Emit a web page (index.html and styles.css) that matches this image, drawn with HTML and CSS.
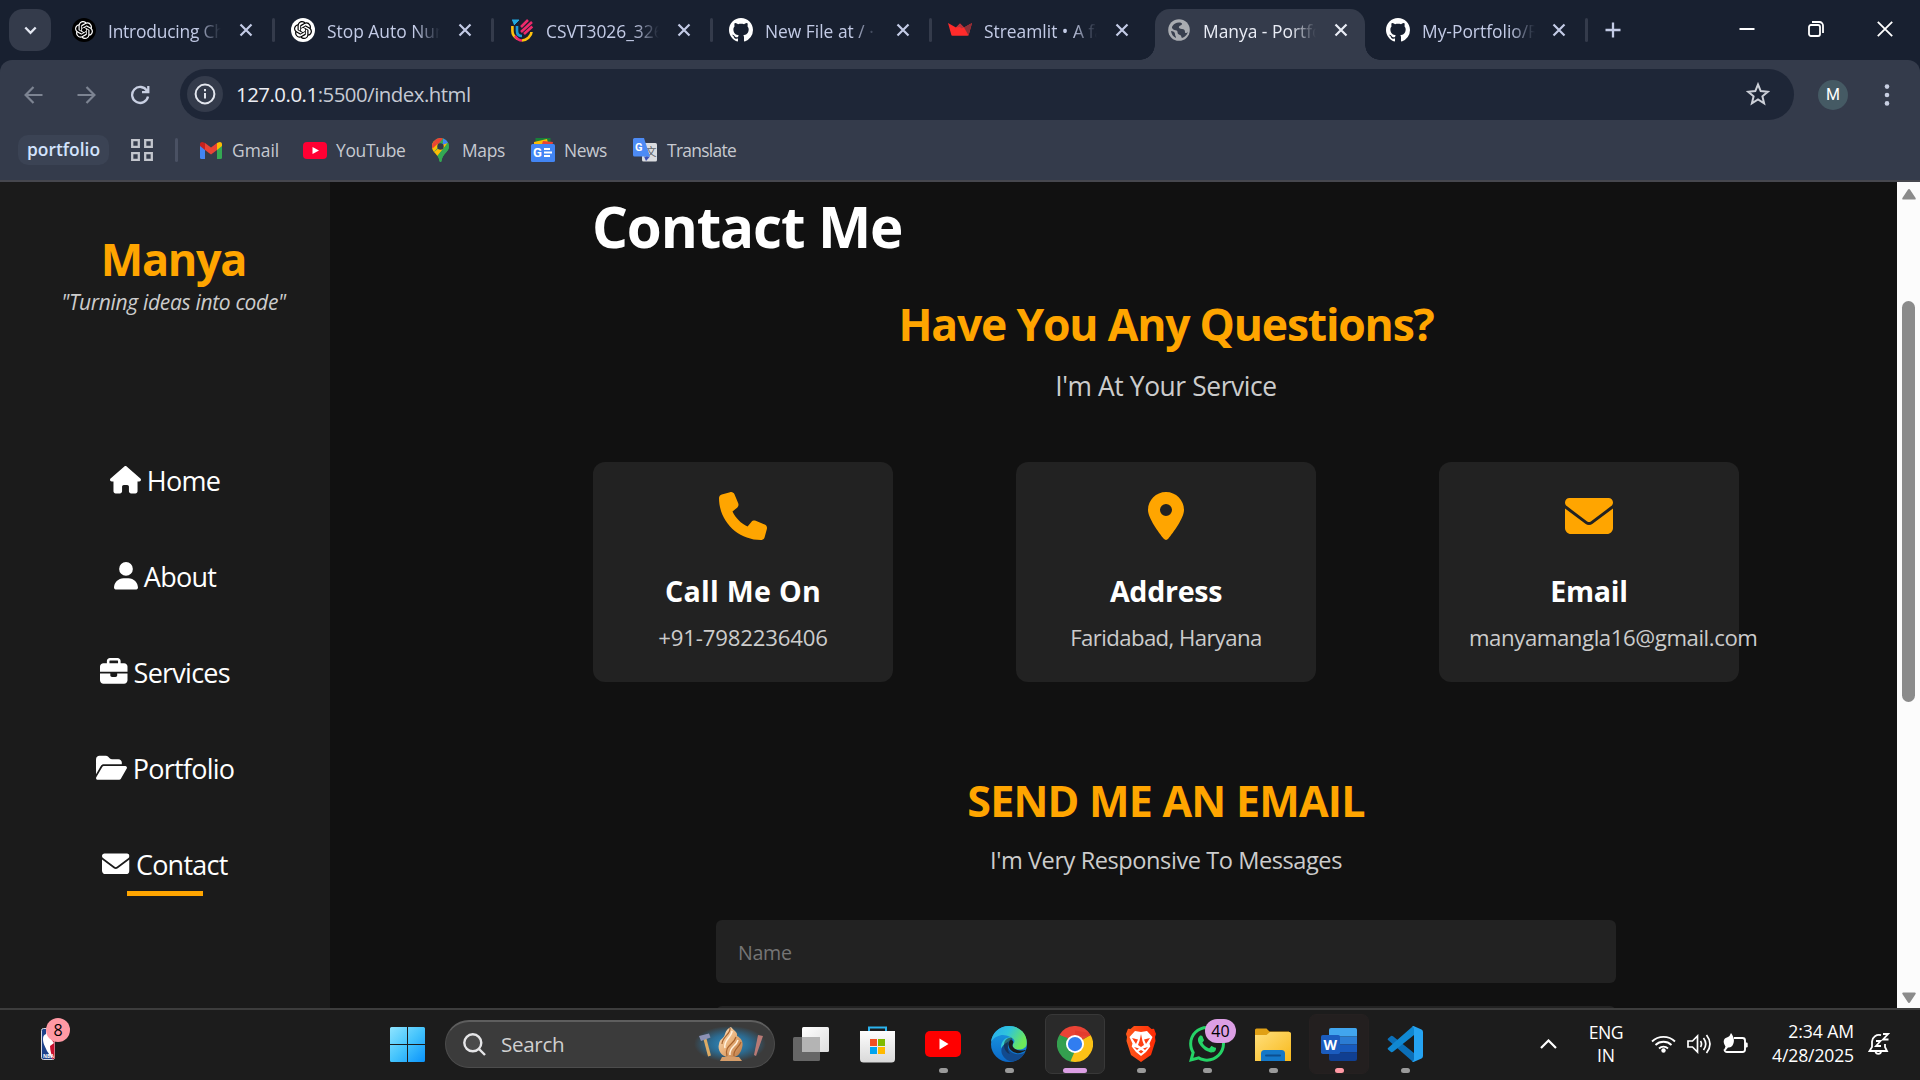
FILE: index.html
```html
<!DOCTYPE html>
<html lang="en">
<head>
<meta charset="utf-8">
<title>Manya - Portfolio</title>
<link rel="stylesheet" href="styles.css">
</head>
<body>
<svg class="defs" width="0" height="0" aria-hidden="true">
  <defs>
    <symbol id="close" viewBox="0 0 14 14"><path d="M1.5 1.5l11 11M12.5 1.5l-11 11" fill="none" stroke="currentColor" stroke-width="2.2"/></symbol>
    <symbol id="openai" viewBox="0 0 24 24"><path fill="currentColor" d="M22.2819 9.8211a5.9847 5.9847 0 0 0-.5157-4.9108 6.0462 6.0462 0 0 0-6.5098-2.9A6.0651 6.0651 0 0 0 4.9807 4.1818a5.9847 5.9847 0 0 0-3.9977 2.9 6.0462 6.0462 0 0 0 .7427 7.0966 5.98 5.98 0 0 0 .511 4.9107 6.051 6.051 0 0 0 6.5146 2.9001A5.9847 5.9847 0 0 0 13.2599 24a6.0557 6.0557 0 0 0 5.7718-4.2058 5.9894 5.9894 0 0 0 3.9977-2.9001 6.0557 6.0557 0 0 0-.7475-7.0729zm-9.022 12.6081a4.4755 4.4755 0 0 1-2.8764-1.0408l.1419-.0804 4.7783-2.7582a.7948.7948 0 0 0 .3927-.6813v-6.7369l2.02 1.1686a.071.071 0 0 1 .038.052v5.5826a4.504 4.504 0 0 1-4.4945 4.4944zm-9.6607-4.1254a4.4708 4.4708 0 0 1-.5346-3.0137l.142.0852 4.783 2.7582a.7712.7712 0 0 0 .7806 0l5.8428-3.3685v2.3324a.0804.0804 0 0 1-.0332.0615L9.74 19.9502a4.4992 4.4992 0 0 1-6.1408-1.6464zM2.3408 7.8956a4.485 4.485 0 0 1 2.3655-1.9728V11.6a.7664.7664 0 0 0 .3879.6765l5.8144 3.3543-2.0201 1.1685a.0757.0757 0 0 1-.071 0l-4.8303-2.7865A4.504 4.504 0 0 1 2.3408 7.872zm16.5963 3.8558L13.1038 8.364 15.1192 7.2a.0757.0757 0 0 1 .071 0l4.8303 2.7913a4.4944 4.4944 0 0 1-.6765 8.1042v-5.6772a.79.79 0 0 0-.407-.667zm2.0107-3.0231l-.142-.0852-4.7735-2.7818a.7759.7759 0 0 0-.7854 0L9.409 9.2297V6.8974a.0662.0662 0 0 1 .0284-.0615l4.8303-2.7866a4.4992 4.4992 0 0 1 6.6802 4.66zM8.3065 12.863l-2.02-1.1638a.0804.0804 0 0 1-.038-.0567V6.0742a4.4992 4.4992 0 0 1 7.3757-3.4537l-.142.0805L8.704 5.459a.7948.7948 0 0 0-.3927.6813zm1.0976-2.3654l2.602-1.4998 2.6069 1.4998v2.9994l-2.5974 1.4997-2.6067-1.4997Z"/></symbol>
    <symbol id="github" viewBox="0 0 16 16"><path fill="#fff" d="M8 0C3.58 0 0 3.58 0 8c0 3.54 2.29 6.53 5.47 7.59.4.07.55-.17.55-.38 0-.19-.01-.82-.01-1.49-2.01.37-2.53-.49-2.69-.94-.09-.23-.48-.94-.82-1.13-.28-.15-.68-.52-.01-.53.63-.01 1.08.58 1.23.82.72 1.21 1.87.87 2.33.66.07-.52.28-.87.51-1.07-1.78-.2-3.64-.89-3.64-3.95 0-.87.31-1.59.82-2.15-.08-.2-.36-1.02.08-2.12 0 0 .67-.21 2.2.82.64-.18 1.32-.27 2-.27s1.36.09 2 .27c1.53-1.04 2.2-.82 2.2-.82.44 1.1.16 1.92.08 2.12.51.56.82 1.27.82 2.15 0 3.07-1.87 3.75-3.65 3.95.29.25.54.73.54 1.48 0 1.07-.01 1.93-.01 2.2 0 .21.15.46.55.38A8.01 8.01 0 0 0 16 8c0-4.42-3.58-8-8-8z"/></symbol>
    <symbol id="envelope" viewBox="0 0 512 512"><path fill="currentColor" d="M48 64C21.5 64 0 85.5 0 112c0 15.1 7.1 29.3 19.2 38.4L236.8 313.6c11.4 8.5 27 8.5 38.4 0L492.8 150.4c12.1-9.1 19.2-23.3 19.2-38.4c0-26.5-21.5-48-48-48H48zM0 176V384c0 35.3 28.7 64 64 64H448c35.3 0 64-28.7 64-64V176L294.4 339.2c-22.8 17.1-54 17.1-76.8 0L0 176z"/></symbol>
    <linearGradient id="win" x1="0" y1="0" x2="1" y2="1"><stop offset="0" stop-color="#8fe4ff"/><stop offset=".5" stop-color="#45c4fc"/><stop offset="1" stop-color="#0a93fb"/></linearGradient>
    <linearGradient id="bag" x1="0" y1="0" x2="0" y2="1"><stop offset="0" stop-color="#fdfdfd"/><stop offset="1" stop-color="#d9d9d9"/></linearGradient>
    <linearGradient id="edgeTop" x1="0" y1="0" x2="1" y2=".4"><stop offset="0" stop-color="#27a9f2"/><stop offset=".5" stop-color="#2fc4dc"/><stop offset="1" stop-color="#6ce85a"/></linearGradient>
    <linearGradient id="edgeLeft" x1="0" y1="0" x2="0" y2="1"><stop offset="0" stop-color="#1b9de2"/><stop offset="1" stop-color="#0b68c8"/></linearGradient>
    <linearGradient id="brave" x1="0" y1="0" x2="1" y2="0"><stop offset="0" stop-color="#ff5a1c"/><stop offset="1" stop-color="#ff2a05"/></linearGradient>
    <linearGradient id="folder" x1="0" y1="0" x2="1" y2="1"><stop offset="0" stop-color="#ffdf7c"/><stop offset="1" stop-color="#f8b91b"/></linearGradient>
    <linearGradient id="glass" x1="0" y1="0" x2="1" y2="1"><stop offset="0" stop-color="#fff"/><stop offset="1" stop-color="#dedede"/></linearGradient>
    <radialGradient id="glow"><stop offset="0" stop-color="#2f8fc8"/><stop offset=".55" stop-color="#2c6b91"/><stop offset="1" stop-color="#3b3b3b"/></radialGradient>
    <linearGradient id="clay" x1="0" y1="0" x2="1" y2="1"><stop offset="0" stop-color="#fbe3c6"/><stop offset=".5" stop-color="#e9b27b"/><stop offset="1" stop-color="#b87542"/></linearGradient>
  </defs>
</svg>

<header class="browser">
  <div class="tabstrip">
    <button class="tab-search"><svg width="13" height="9" viewBox="0 0 13 9"><path d="M1.3 1.5l5.2 5.3 5.2-5.3" fill="none" stroke="#e4e8f2" stroke-width="2.3"/></svg></button>
    <div class="tab"><span class="favicon fav-dark"><svg width="18" height="18"><use href="#openai"/></svg></span><span class="tab-title tight">Introducing ChatGPT</span><svg class="tab-close"><use href="#close"/></svg></div>
    <div class="tab"><span class="favicon fav-light"><svg width="18" height="18"><use href="#openai"/></svg></span><span class="tab-title">Stop Auto Numbering</span><svg class="tab-close"><use href="#close"/></svg></div>
    <div class="tab"><span class="favicon"><svg width="24" height="24" viewBox="0 0 24 24" fill="none" stroke-width="2.6"><path d="M2 2h7L4 7" fill="#20a9e0" stroke="#20a9e0" stroke-width="1"/><path d="M2.4 8v5c0 3 2 6 5 8" stroke="#ffc20e"/><path d="M7 8v5c0 4 2 5 5 5" stroke="#1b9ad6"/><path d="M18 2l-7 7M22 4L11 14" stroke="#ee2a6b"/><path d="M22.3 8.500L14 16" stroke="#ee2a6b"/><path d="M21.500 14c0 4-5 8.500-9.500 8.500" stroke="#ffc20e"/><path d="M5 18c2 3 5 4.500 7 4.500" stroke="#ee2a6b"/></svg></span><span class="tab-title">CSVT3026_3260</span><svg class="tab-close"><use href="#close"/></svg></div>
    <div class="tab"><span class="favicon"><svg width="24" height="24"><use href="#github"/></svg></span><span class="tab-title">New File at / · My</span><svg class="tab-close"><use href="#close"/></svg></div>
    <div class="tab no-line"><span class="favicon"><svg width="24" height="24" viewBox="0 0 24 24"><path d="M0 5l8 4.500 4-4 4 4L24 5l-3.500 12.500H3.500z" fill="#ff2b2b"/><path d="M12 5.500l4 4-4 1.500-4-1.500z" fill="#b8343c"/><path d="M16 9.500L24 5l-3.500 12.500z" fill="#8b3038"/><path d="M12 9l8 8.500H4L8 9.500z" fill="#ff2b2b"/></svg></span><span class="tab-title">Streamlit • A faster</span><svg class="tab-close"><use href="#close"/></svg></div>
    <div class="tab active"><span class="favicon"><svg width="22" height="22" viewBox="0 0 22 22"><circle cx="11" cy="11" r="10.800" fill="#a9acb1"/><path d="M11 3.500c2 0 3 .5 3 1.500 0 1.500-2 1-3 2.500-.8 1.500 1 2.500 3 2.500s3 1 3 3 2 1 3-.5a9 9 0 0 1-6 6.500c-1-1-.5-2.500-2-3s-2.500-1-2.500-3-1.500-1.500-3-2S3 9 4.500 7 8 3.500 11 3.500z" fill="#383f4e"/><path d="M3 12c2 0 4 1 4 3s1 2 1 4a9 9 0 0 1-5-7z" fill="#383f4e"/></svg></span><span class="tab-title">Manya - Portfolio</span><svg class="tab-close"><use href="#close"/></svg></div>
    <div class="tab last"><span class="favicon"><svg width="24" height="24"><use href="#github"/></svg></span><span class="tab-title">My-Portfolio/README</span><svg class="tab-close"><use href="#close"/></svg></div>
    <button class="new-tab"><svg width="16" height="16" viewBox="0 0 16 16"><path d="M8 .5v15M.5 8h15" stroke="#c3cbe6" stroke-width="2.300"/></svg></button>
    <div class="window-controls">
      <svg width="16" height="16" viewBox="0 0 16 16"><path d="M.5 8h15" stroke="#fff" stroke-width="2"/></svg>
      <svg width="16" height="16" viewBox="0 0 16 16" fill="none" stroke="#fff" stroke-width="1.800"><rect x="1" y="4" width="11" height="11" rx="2"/><path d="M4 1h7.500A3.500 3.500 0 0 1 15 4.500V12"/></svg>
      <svg width="16" height="16" viewBox="0 0 16 16"><path d="M.8.8l14.400 14.400M15.200.8L.8 15.200" stroke="#fff" stroke-width="1.800"/></svg>
    </div>
  </div>

  <div class="toolbar">
    <div class="nav-buttons">
      <svg width="19" height="18" viewBox="0 0 19 18" fill="none" stroke="#7d8492" stroke-width="2.200"><path d="M18.500 9H2M9.500 1L1.600 9l7.900 8"/></svg>
      <svg width="19" height="18" viewBox="0 0 19 18" fill="none" stroke="#7d8492" stroke-width="2.200"><path d="M.5 9H17M9.500 1l7.900 8-7.900 8"/></svg>
      <svg width="20" height="20" viewBox="0 0 20 20" fill="none" stroke="#c8cfe2" stroke-width="2.300"><path d="M17 5.800A8 8 0 1 0 18 11.500M18.300 1v6.200H12"/></svg>
    </div>
    <div class="omnibox">
      <span class="site-info"><svg width="22" height="22" viewBox="0 0 22 22" fill="none" stroke="#e3e6ee" stroke-width="2"><circle cx="11" cy="11" r="9.400"/><path d="M11 10v5.500M11 6v2.200"/></svg></span>
      <span class="url"><span class="host">127.0.0.1</span>:5500/index.html</span>
      <svg class="star" width="24" height="24" viewBox="0 0 24 24"><path d="M12 2.500l2.700 6.600 7.100.6-5.400 4.600 1.700 7L12 17.500l-6.100 3.800 1.700-7-5.400-4.600 7.100-.6z" fill="none" stroke="#cdd0d8" stroke-width="2"/></svg>
    </div>
    <span class="avatar">M</span>
    <svg class="menu" width="6" height="22" viewBox="0 0 6 22" fill="#c8cfe2"><circle cx="3" cy="2.600" r="2.300"/><circle cx="3" cy="11" r="2.300"/><circle cx="3" cy="19.400" r="2.300"/></svg>
  </div>

  <nav class="bookmarks">
    <span class="group-chip">portfolio</span>
    <svg class="apps" width="22" height="22" viewBox="0 0 22 22" fill="none" stroke="#c3c6cd" stroke-width="2.300"><path d="M1.200 1.200h6.600v6.600H1.200zM14.200 1.200h6.600v6.600h-6.600zM1.200 14.200h6.600v6.600H1.200zM14.200 14.200h6.600v6.600h-6.600z"/></svg>
    <span class="divider"></span>
    <span class="bookmark gmail"><svg width="22" height="17" viewBox="0 0 22 17"><path d="M0 2v13.500A1.500 1.500 0 0 0 1.500 17H5V6z" fill="#4285f4"/><path d="M17 6v11h3.500a1.500 1.500 0 0 0 1.500-1.500V2z" fill="#34a853"/><path d="M17 1v7l5-4V2.200C22 .2 19.800-.6 18.200.6z" fill="#fbbc04"/><path d="M5 8V1l6 4.600L17 1v7l-6 4.500z" fill="#ea4335"/><path d="M0 2.200V4l5 4V1L3.800.6C2.200-.6 0 .2 0 2.200z" fill="#c5221f"/></svg>Gmail</span>
    <span class="bookmark youtube"><svg width="24" height="17" viewBox="0 0 24 17"><rect width="24" height="17" rx="4" fill="#f03"/><path d="M9.500 4.900v7.200l6.500-3.600z" fill="#fff"/></svg>YouTube</span>
    <span class="bookmark maps"><svg width="17" height="24" viewBox="0 0 17 24"><path d="M8.500 0A8.500 8.500 0 0 1 17 8.500c0 5.500-6.500 7-7.500 14.500-.2 1.300-1.800 1.300-2 0C6.500 15.500 0 14 0 8.500A8.500 8.500 0 0 1 8.500 0z" fill="#34a853"/><path d="M2 14C.800 12.400 0 10.700 0 8.500c0-2 .7-4 2-5.500l4 3.400-.4 3.400z" fill="#fbbc04"/><path d="M2 3A8.500 8.500 0 0 1 11 .4L6 6.400z" fill="#ea4335"/><path d="M11 .4A8.500 8.500 0 0 1 16 4.500L2.500 14.700 11 5z" fill="#4285f4"/><path d="M11.500 6.500L2 14c1 1.300 2.200 2.400 3.400 3.900L16 5z" fill="#fbbc04"/><path d="M16 4.500c1.500 3 1.200 6-.8 8.500-1.900 2.400-4.900 4.800-5.700 10-.2 1.300-1.800 1.300-2 0-.3-2-1-3.700-2.100-5.100z" fill="#34a853"/><circle cx="8.500" cy="8.500" r="3.200" fill="#303a4c"/><path d="M2 3A8.500 8.500 0 0 0 0 8.500C0 9 .2 9.800.5 10.500L5.500 6z" fill="#ea4335"/></svg>Maps</span>
    <span class="bookmark news"><svg width="24" height="24" viewBox="0 0 24 24"><path d="M4.500 0h15v8h-15z" fill="#188038"/><path d="M3 4l13-3 2 8H3z" fill="#fbbc04"/><path d="M12 3l10 1-1 5H10z" fill="#ea4335"/><rect y="6" width="24" height="18" rx="1.500" fill="#4285f4"/><path d="M13 11h6M13 14.500h8M13 18h6" stroke="#fff" stroke-width="1.800"/><text x="2" y="19" class="icon-g">G</text></svg>News</span>
    <span class="bookmark translate"><svg width="24" height="24" viewBox="0 0 24 24"><rect x="9" y="5" width="15" height="18.500" rx="1.500" fill="#dadce0"/><text x="12.500" y="18" class="icon-zh">文</text><path d="M11 18.500h6L13 23z" fill="#3f51b5"/><path d="M1.500 0H11l6 18.500H1.500A1.500 1.500 0 0 1 0 17V1.500A1.500 1.500 0 0 1 1.500 0z" fill="#4d8bf5"/><text x="2" y="13" class="icon-g small">G</text></svg>Translate</span>
  </nav>
</header>

<div class="viewport">
  <aside class="sidebar">
    <div class="brand">Manya</div>
    <div class="tagline">"Turning ideas into code"</div>
    <ul class="menu-list">
      <li><svg width="31" height="27.500" viewBox="0 0 576 512"><path fill="#fff" d="M575.800 255.500c0 18-15 32.100-32 32.100h-32l.7 160.200c0 2.700-.2 5.400-.5 8.100V472c0 22.100-17.900 40-40 40H456c-1.100 0-2.200 0-3.300-.1c-1.400 .1-2.800 .1-4.200 .1H416 392c-22.100 0-40-17.900-40-40V448 384c0-17.700-14.300-32-32-32H256c-17.700 0-32 14.300-32 32v64 24c0 22.100-17.900 40-40 40H160 128.100c-1.500 0-3-.1-4.500-.2c-1.200 .1-2.400 .2-3.600 .2H104c-22.100 0-40-17.900-40-40V360c0-.9 0-1.900 .1-2.800V287.600H32c-18 0-32-14-32-32.100c0-9 3-17 10-24L266.400 8c7-7 15-8 22-8s15 2 21 7L564.800 231.500c8 7 12 15 11 24z"/></svg><span>Home</span></li>
      <li><svg width="24" height="27.500" viewBox="0 0 448 512"><path fill="#fff" d="M224 256A128 128 0 1 0 224 0a128 128 0 1 0 0 256zm-45.700 48C79.800 304 0 383.800 0 482.300C0 498.700 13.300 512 29.700 512H418.300c16.400 0 29.700-13.300 29.700-29.700C448 383.800 368.200 304 269.700 304H178.300z"/></svg><span>About</span></li>
      <li><svg width="27.500" height="27.500" viewBox="0 0 512 512"><path fill="#fff" d="M184 48H328c4.400 0 8 3.600 8 8V96H176V56c0-4.400 3.600-8 8-8zm-56 8V96H64C28.700 96 0 124.700 0 160v96H192 320 512V160c0-35.300-28.700-64-64-64H384V56c0-30.900-25.100-56-56-56H184c-30.900 0-56 25.100-56 56zM512 288H320v32c0 17.700-14.300 32-32 32H224c-17.700 0-32-14.300-32-32V288H0V416c0 35.300 28.700 64 64 64H448c35.300 0 64-28.700 64-64V288z"/></svg><span>Services</span></li>
      <li><svg width="31" height="27.500" viewBox="0 0 576 512"><path fill="#fff" d="M88.700 223.800L0 375.800V96C0 60.700 28.700 32 64 32H181.500c17 0 33.300 6.700 45.300 18.700l26.500 26.500c12 12 28.300 18.700 45.300 18.700H416c35.300 0 64 28.700 64 64v32H144c-22.800 0-43.800 12.100-55.300 31.800zm27.600 16.100C122.100 230 132.600 224 144 224H544c11.500 0 22 6.100 27.700 16.100s5.700 22.200-.1 32.100l-112 192C453.900 474 443.400 480 432 480H32c-11.500 0-22-6.100-27.700-16.100s-5.700-22.200 .1-32.100l112-192z"/></svg><span>Portfolio</span></li>
      <li class="current"><svg class="env" width="27.500" height="27.500"><use href="#envelope"/></svg><span>Contact</span></li>
    </ul>
  </aside>

  <main class="content">
    <h1>Contact Me</h1>
    <h2 class="question">Have You Any Questions?</h2>
    <p class="service">I'm At Your Service</p>
    <div class="cards">
      <section class="card"><svg width="48" height="48" viewBox="0 0 512 512"><path fill="currentColor" d="M164.900 24.600c-7.700-18.600-28-28.500-47.400-23.200l-88 24C12.100 30.200 0 46 0 64C0 311.400 200.600 512 448 512c18 0 33.800-12.100 38.600-29.500l24-88c5.300-19.400-4.600-39.700-23.200-47.400l-96-40c-16.300-6.800-35.200-2.100-46.300 11.600L304.700 368C234.300 334.700 177.300 277.700 144 207.300L193.300 167c13.700-11.200 18.400-30 11.600-46.300l-40-96z"/></svg><h3 class="call">Call Me On</h3><p class="phone">+91-7982236406</p></section>
      <section class="card"><svg width="36" height="48" viewBox="0 0 384 512"><path fill="currentColor" d="M215.700 499.200C267 435 384 279.400 384 192C384 86 298 0 192 0S0 86 0 192c0 87.400 117 243 168.300 307.200c12.300 15.300 35.100 15.300 47.400 0zM192 128a64 64 0 1 1 0 128 64 64 0 1 1 0-128z"/></svg><h3>Address</h3><p class="place">Faridabad, Haryana</p></section>
      <section class="card"><svg width="48" height="48"><use href="#envelope"/></svg><h3>Email</h3><p class="mail">manyamangla16@gmail.com</p></section>
    </div>
    <h2 class="send">SEND ME AN EMAIL</h2>
    <p class="messages">I'm Very Responsive To Messages</p>
    <form class="form">
      <input type="text" placeholder="Name">
      <input type="email">
    </form>
  </main>

  <div class="scrollbar">
    <svg class="arrow-up" width="14" height="11" viewBox="0 0 14 11"><path d="M7 0q.8 0 1.300.9L13.600 9q.6 1.500-1 1.600H1.400Q-.2 10.500.4 9L5.700.9Q6.200 0 7 0z" fill="#8b8b8b"/></svg>
    <span class="thumb"></span>
    <svg class="arrow-down" width="14" height="11" viewBox="0 0 14 11"><path d="M7 11q.8 0 1.300-.9L13.600 2q.6-1.500-1-1.600H1.400Q-.2.500.4 2l5.300 8.100q.5.900 1.300.9z" fill="#8b8b8b"/></svg>
  </div>
</div>

<footer class="taskbar">
  <div class="widget">
    <svg width="14" height="32" viewBox="0 0 14 32"><rect x=".5" y=".5" width="13" height="31" rx="2" fill="#1d428a" stroke="#d5d8df"/><path d="M7 1h5.500q1 0 1 1v28q0 1-1 1H11L7 18z" fill="#c8102e"/><path d="M5 1c3 2 3 5 2 7 3 2 4 5 6 7l-4 3c0 5 2 9 2.500 13L6 23C4 18 2 16 2 11c0-3 1-4 3-5z" fill="#fff"/><text x="2" y="30" class="icon-nba">NBA</text></svg>
    <span class="badge pink">8</span>
  </div>
  <div class="app"><svg width="35" height="35" viewBox="0 0 35 35" fill="url(#win)"><path d="M1.500 0H17v17H0V1.500A1.500 1.500 0 0 1 1.500 0zM18 0h15.500A1.500 1.500 0 0 1 35 1.500V17H18zM0 18h17v17H1.500A1.500 1.500 0 0 1 0 33.500zM18 18h17v15.500a1.500 1.500 0 0 1-1.500 1.500H18z"/></svg></div>
  <div class="search">
    <svg width="23" height="23" viewBox="0 0 23 23" fill="none" stroke="#e6e6e8" stroke-width="2.400"><circle cx="9.800" cy="9.800" r="8.500" fill="#4a4a4a"/><path d="M16 16l6 6"/></svg>
    <span>Search</span>
    <svg width="72" height="40" viewBox="0 0 72 40"><ellipse cx="36" cy="20" rx="36" ry="18" fill="url(#glow)"/><path d="M11 15l4.500 17" stroke="#dcab65" stroke-width="3"/><path d="M5 12l10-2.500 1.500 4L7 17z" fill="#8c91b5"/><path d="M37 3c3 4 7 5 6 9 4 2 7 6 5 12-1 5-5 9-8 9h-6c-6 0-11-7-9-13 1-6 5-5 6-10 1-3 2-5 6-7z" fill="url(#clay)"/><path d="M36 4c1 6-8 9-8 16M42 13c-2 8-12 8-9 19M47 18c-2 6-8 7-7 14" fill="none" stroke="#a8642f" stroke-width="1.200"/><path d="M38 7c0 6-9 9-7 17M44 16c-2 7-9 7-8 15" fill="none" stroke="#fff0dc" stroke-width="1.500"/><path d="M28 33h17l3 4H26z" fill="#d79e6a"/><path d="M64 11l5 1-7 20-2-1z" fill="#b87a75"/></svg>
  </div>
  <div class="app view"><svg width="36" height="34" viewBox="0 0 36 34"><rect x="0" y="10" width="27" height="24" rx="1.500" fill="#666"/><rect x="9" y="0" width="27" height="25" rx="1.500" fill="url(#glass)"/><path d="M9 10h18v15H9z" fill="#b4b4b4"/></svg></div>
  <div class="app"><svg width="35" height="37" viewBox="0 0 35 37"><path d="M9 8V1.500h17V8" fill="none" stroke="#2bb3ee" stroke-width="2"/><path d="M0 5h35v28a3.500 3.500 0 0 1-3.500 3.500h-28A3.500 3.500 0 0 1 0 33z" fill="url(#bag)"/><path d="M10 13h7v7h-7z" fill="#f25022"/><path d="M18 13h7v7h-7z" fill="#7fba00"/><path d="M10 21h7v7h-7z" fill="#00a4ef"/><path d="M18 21h7v7h-7z" fill="#ffb900"/></svg></div>
  <div class="app running"><svg width="36" height="26" viewBox="0 0 36 26"><rect width="36" height="26" rx="5" fill="#f00"/><path d="M14.500 7.500v11l9-5.500z" fill="#fff"/></svg></div>
  <div class="app running"><svg width="36" height="36" viewBox="0 0 36 36"><circle cx="18" cy="18" r="18" fill="url(#edgeLeft)"/><path d="M10 22c0-8 6-12 11-10 3 1.500 3 4 1 6-1 2 0 6 7 5.500 2.500 0 4-1 6-3 3-8-3-20.500-17-20.500C8 0 1 7 0 16c3-5 8-7 12-7 5 0 9 3 9 3z" fill="url(#edgeTop)"/><path d="M34 26.500c-3 1.800-8 2.500-12 .5-5-2.500-6-7-5-11-5 2-8 7-6 12 2 4.500 6 7.500 11 7.500 5-.5 9-4 12-9z" fill="#124a8e"/><path d="M21 12c-4-1-8 2-8 7s3 8 6 9c-3-4-3-8 0-11 2-1 3-3 2-5z" fill="#1a2030" opacity=".55"/><path d="M19.500 14c-3 3-2.500 8 1.500 11 4 3 9 3 14-1l-1.500 0c-2 1-10 1-12-4 0-2 .8-2.500.8-4 0-1-1.200-2.500-2.800-2z" fill="#1c1c1c"/></svg></div>
  <div class="app running focused"><svg width="36" height="36" viewBox="0 0 48 48"><path d="M24 24L3.200 12A24 24 0 0 1 44.800 12z" fill="#ea4335"/><path d="M24 24L44.800 12A24 24 0 0 1 24 48z" fill="#fbc116"/><path d="M24 24V48A24 24 0 0 1 3.200 12z" fill="#34a04f"/><path d="M24 13h20.800L42 9 24 6z" fill="#e33b2e"/><path d="M33.500 29.500L24 48l-6-1 6-14z" fill="#fbc116"/><path d="M14.500 29.500L3.200 12l11 4z" fill="#2f9e4d"/><circle cx="24" cy="24" r="12" fill="#fff"/><circle cx="24" cy="24" r="9.500" fill="#317df0"/></svg></div>
  <div class="app running"><svg width="30" height="36" viewBox="0 0 30 36"><path d="M8 0h14l3.500 3 2.500-.3L30 8l-1 3 .5 4-4.500 14L15 36 5 29 .5 15 1 11 0 8l2-5.300L4.500 3z" fill="url(#brave)"/><path d="M9 5l6 1 6-1 5.500 6-3 6.500.8 3L20 26l-5 4-5-4-4.300-5.500.8-3-3-6.500z" fill="#fff"/><path d="M6 12l6 1.500L10 18zM24 12l-6 1.500 2 4.500zM15 8l1.500 7L18 19l-3 2-3-2 1.500-4zM8 21l5 1.500-2 1.500zM22 21l-5 1.500 2 1.500zM12.500 25.500L15 24l2.500 1.500L15 27.500z" fill="#ff4013"/></svg></div>
  <div class="app running"><svg width="36" height="36" viewBox="0 32 448 448"><path fill="#25d366" d="M380.900 97.100C339 55.100 283.200 32 223.900 32c-122.400 0-222 99.600-222 222 0 39.100 10.200 77.300 29.600 111L0 480l117.700-30.900c32.400 17.700 68.900 27 106.100 27h.1c122.300 0 224.100-99.600 224.100-222 0-59.300-25.200-115-67.100-157zm-157 341.600c-33.200 0-65.700-8.900-94-25.700l-6.700-4-69.800 18.300L72 359.200l-4.400-7c-18.500-29.400-28.200-63.300-28.200-98.200 0-101.700 82.800-184.500 184.600-184.500 49.300 0 95.600 19.200 130.400 54.100 34.800 34.900 56.200 81.200 56.100 130.500 0 101.800-84.900 184.600-186.600 184.600zm101.200-138.200c-5.500-2.800-32.800-16.200-37.900-18-5.100-1.900-8.800-2.800-12.500 2.800-3.700 5.600-14.300 18-17.600 21.800-3.200 3.700-6.500 4.200-12 1.400-32.600-16.300-54-29.100-75.500-66-5.700-9.800 5.700-9.100 16.300-30.300 1.800-3.700.9-6.900-.5-9.700-1.400-2.800-12.500-30.100-17.100-41.200-4.500-10.800-9.100-9.300-12.500-9.500-3.200-.2-6.900-.2-10.600-.2-3.700 0-9.700 1.400-14.800 6.900-5.100 5.600-19.400 19-19.400 46.300 0 27.300 19.900 53.700 22.600 57.400 2.800 3.700 39.100 59.700 94.800 83.800 35.200 15.200 49 16.500 66.600 13.900 10.700-1.600 32.800-13.400 37.400-26.400 4.600-13 4.600-24.100 3.200-26.400-1.300-2.500-5-3.900-10.500-6.600z"/></svg><span class="badge violet">40</span></div>
  <div class="app running"><svg width="36" height="33" viewBox="0 0 36 33"><path d="M0 2Q0 .5 1.500.5h10l3 3H34v8H0z" fill="#e0a015"/><path d="M0 7h11.500l3.500-3h19.500Q36 4 36 5.500V33H0z" fill="url(#folder)"/><path d="M6 33v-7.500a3.500 3.500 0 0 1 3.500-3.500h17a3.500 3.500 0 0 1 3.500 3.500V33z" fill="#1478c8"/><path d="M11 27.500h14" stroke="#0c4f8f" stroke-width="2" stroke-linecap="round"/></svg></div>
  <div class="app running alert"><svg width="36" height="33" viewBox="0 0 36 33"><path d="M10 0h24.500Q36 0 36 1.500V8.500H8V2q0-2 2-2z" fill="#41a5ee"/><path d="M8 8.500h28v8H8z" fill="#2b7cd3"/><path d="M8 16.500h28v8H8z" fill="#185abd"/><path d="M8 24.500h28V31q0 2-2 2H10q-2 0-2-2z" fill="#103f91"/><rect y="7" width="19" height="19" rx="1.800" fill="#1b5cbe"/><text x="2.500" y="21.500" class="icon-w">W</text></svg></div>
  <div class="app running"><svg width="36" height="36" viewBox="0 0 36 36"><path d="M1 12.500l3-2.500q1-.5 2 .2L27 27v8.500q-1 .3-2-.6L1 14q-.8-.8 0-1.500z" fill="#0b6fb8"/><path d="M1 23.500l3 2.500q1 .5 2-.2L27 9V.5q-1-.3-2 .6L1 22q-.8.8 0 1.500z" fill="#1088d2"/><path d="M26.500 0L34.500 3.500Q36 4.200 36 6v24q0 1.800-1.500 2.500L26.500 36q-1 0-1.500-.8 2 0 2-2V2.800q0-2-2-2 .5-.8 1.500-.8z" fill="#25a3f2"/></svg></div>

  <div class="tray">
    <svg class="chevron" width="17" height="10" viewBox="0 0 17 10"><path d="M1 9l7.500-7.500L16 9" fill="none" stroke="#fff" stroke-width="2.200"/></svg>
    <div class="lang"><span class="eng">ENG</span><span>IN</span></div>
    <svg class="wifi" width="25" height="19" viewBox="0 0 25 19" fill="none" stroke="#fff" stroke-width="1.800"><path d="M1 7.500a16.500 16.500 0 0 1 23 0M4.500 11a11.500 11.500 0 0 1 16 0M8 14.500a6.500 6.500 0 0 1 9 0"/><circle cx="12.500" cy="16.500" r="2.200" fill="#fff" stroke="none"/></svg>
    <svg class="sound" width="25" height="20" viewBox="0 0 25 20" fill="none" stroke="#fff" stroke-width="1.700"><path d="M1 7h4.500L10.500 2v16l-5-5H1zM13.500 7q2 3 0 6M16.500 4q4.500 6 0 12M19.500 1q7 9 0 18"/></svg>
    <svg class="battery" width="25" height="21" viewBox="0 0 25 21"><path d="M11 5h8.500A2.500 2.500 0 0 1 22 7.500v9a2.500 2.500 0 0 1-2.500 2.500H4A2.500 2.500 0 0 1 1.500 16.500" fill="none" stroke="#fff" stroke-width="1.900"/><path d="M22 9.500h1.500q1.200 0 1.200 1.200v2.600q0 1.200-1.200 1.200H22z" fill="#fff"/><path d="M8 0c3 4 4 8 1.500 12.500Q8 15 5 14.500L3 17H1l1.500-3.500C-1 8 1 5 5 4q2-1 3-4z" fill="#fff"/></svg>
    <div class="clock"><span class="time">2:34 AM</span><span class="date">4/28/2025</span></div>
    <svg class="bell" width="22" height="23" viewBox="0 0 22 23"><path d="M13 3.200A7 7 0 0 0 4 9.500v5.500L1.500 19h17.500L17 15v-3M7.500 19a2.800 2.800 0 0 0 5.600 0" fill="none" stroke="#fff" stroke-width="1.800"/><path d="M8 9h4.500L8 14h5M15 2h5l-5 5.500h5.500" fill="none" stroke="#fff" stroke-width="1.800"/></svg>
  </div>
</footer>
</body>
</html>
```
FILE: styles.css
```css
* { box-sizing: border-box; margin: 0; padding: 0; }

body {
  width: 1920px;
  height: 1080px;
  overflow: hidden;
  display: flex;
  flex-direction: column;
  background: #111;
  color: #fff;
  font-family: "Open Sans", "Noto Sans", sans-serif;
}

svg { display: block; flex: none; }
.defs { position: absolute; }
button { border: 0; background: none; }

/* Browser window */
.browser {
  height: 182px;
  flex: none;
  background: #182030;
  border-bottom: 2px solid #46474e;
  display: flex;
  flex-direction: column;
  font-size: 17.4px;
}

.tabstrip { height: 60px; flex: none; display: flex; padding-left: 9px; }

.tab-search {
  width: 42px;
  height: 42px;
  margin: 9px 4px 0 0;
  border-radius: 14px;
  background: #343b4b;
  display: flex;
  align-items: center;
  justify-content: center;
}

.tab {
  width: 219px;
  position: relative;
  display: flex;
  align-items: center;
  padding-left: 17px;
  color: #c3cbe6;
}

.tab::after {
  content: "";
  position: absolute;
  right: -1px;
  top: 18px;
  width: 3px;
  height: 24px;
  border-radius: 2px;
  background: #343b4b;
}

.tab.no-line::after { display: none; }
.tab.last { width: 218px; }

.favicon {
  width: 24px;
  height: 24px;
  flex: none;
  border-radius: 50%;
  display: flex;
  align-items: center;
  justify-content: center;
}

.fav-dark { background: #000; color: #fff; }
.fav-light { background: #fff; color: #000; }

.tab-title {
  width: 113px;
  margin-left: 12px;
  line-height: 24px;
  padding-top: 2px;
  overflow: hidden;
  white-space: nowrap;
  mask-image: linear-gradient(90deg, #000 78%, transparent);
}

.tight { letter-spacing: -.2px; }
.tab-close { width: 14px; height: 14px; margin-left: 18px; }
.last .tab-close { margin-left: 17px; }

.active { color: #e9ecf5; isolation: isolate; }

.active::before {
  content: "";
  position: absolute;
  z-index: -1;
  inset: 9px 4px 0 5px;
  border-radius: 15px 15px 0 0;
  background: #343b4b;
}

.active::after {
  z-index: -1;
  top: auto;
  bottom: 0;
  left: -10px;
  right: -11px;
  width: auto;
  height: 15px;
  border-radius: 0;
  background:
    radial-gradient(circle at 0 0, transparent 14.5px, #343b4b 15px) left / 15px 15px no-repeat,
    radial-gradient(circle at 100% 0, transparent 14.5px, #343b4b 15px) right / 15px 15px no-repeat;
}

.new-tab { width: 52px; display: flex; align-items: center; justify-content: center; }

.window-controls { margin-left: auto; padding: 0 27px 2px 0; display: flex; align-items: center; gap: 53px; }

.toolbar {
  height: 69px;
  flex: none;
  background: #343b4b;
  border-radius: 12px 12px 0 0;
  display: flex;
  align-items: center;
  padding: 0 30px 0 24px;
}

.nav-buttons { width: 156px; display: flex; align-items: center; gap: 34px; }

.omnibox {
  width: 1614px;
  height: 51px;
  border-radius: 26px;
  background: #1e2637;
  display: flex;
  align-items: center;
  padding: 0 24px 2px 7px;
}

.site-info {
  width: 36px;
  height: 36px;
  border-radius: 50%;
  background: #343b4b;
  display: flex;
  align-items: center;
  justify-content: center;
}

.url { margin-left: 13px; font-size: 20.4px; letter-spacing: -.49px; color: #c6cad4; }
.host { color: #eceef4; }
.star { margin-left: auto; }

.avatar {
  width: 30px;
  height: 30px;
  margin: 0 0 0 24px;
  border-radius: 50%;
  background: #455a64;
  font: 16px/30px Roboto, sans-serif;
  text-align: center;
}

.menu { margin-left: auto; }

.bookmarks {
  height: 51px;
  flex: none;
  display: flex;
  align-items: center;
  background: #343b4b;
  padding: 0 0 9px 18px;
  color: #c7cad1;
}

.group-chip {
  width: 91px;
  height: 30px;
  border-radius: 10px;
  background: #3b4354;
  color: #d3e3fd;
  font-weight: 600;
  line-height: 29px;
  text-align: center;
}

.apps { margin-left: 22px; }
.divider { width: 3px; height: 24px; margin: 0 22px; border-radius: 2px; background: #4a5163; }
.bookmark { display: flex; align-items: center; gap: 10px; line-height: 24px; }
.gmail { width: 103px; }
.youtube { width: 129px; gap: 9px; letter-spacing: -.29px; }
.maps { width: 99px; gap: 13px; letter-spacing: -.31px; }
.news { width: 102px; gap: 9px; letter-spacing: -.44px; }
.translate { letter-spacing: -.69px; }
.icon-g { font: 700 13px Roboto, sans-serif; fill: #fff; letter-spacing: 0; }
.icon-g.small { font-size: 11px; }
.icon-zh { font: 11px "Noto Sans CJK SC", sans-serif; fill: #5f6368; letter-spacing: 0; }

/* Portfolio page */
.viewport { height: 826px; flex: none; display: flex; overflow: hidden; }

.sidebar { width: 330px; flex: none; background: #1b1b1b; padding-top: 52px; text-align: center; }

.brand {
  padding-left: 17px;
  font-size: 45px;
  font-weight: 700;
  line-height: 50px;
  letter-spacing: -1.3px;
  color: orange;
}

.tagline {
  margin-top: 4px;
  padding-left: 17px;
  font-size: 21px;
  font-style: italic;
  line-height: 29px;
  letter-spacing: -.32px;
  color: #ccc;
}

.menu-list { margin-top: 143px; list-style: none; display: flex; flex-direction: column; align-items: center; gap: 56px; }
.menu-list li { height: 40px; display: flex; align-items: center; gap: 6px; position: relative; font-size: 27px; line-height: 41px; letter-spacing: -.75px; }

.current::after {
  content: "";
  position: absolute;
  left: 50%;
  bottom: -12px;
  width: 76px;
  height: 5px;
  margin-left: -38px;
  background: orange;
}

.content { width: 1567px; flex: none; padding: 15px 158px 0 263px; text-align: center; }
h1 { font-size: 56.5px; line-height: 60px; letter-spacing: -1.14px; text-align: left; margin-left: -1px; }
h2 { line-height: 60px; color: orange; }
.question { margin-top: 37px; font-size: 44.5px; letter-spacing: -1.22px; }
.service { margin-top: 14px; font-size: 26.4px; line-height: 36px; letter-spacing: -.41px; color: #ccc; }
.cards { margin-top: 58px; display: flex; justify-content: space-between; }
.card { width: 300px; height: 220px; padding: 30px; border-radius: 12px; background: #222; }
.card svg { margin: 0 auto; color: orange; }
h3 { margin-top: 32px; font-size: 28.6px; line-height: 38px; letter-spacing: -.3px; }
.call { letter-spacing: .3px; }
.card p { margin-top: 13px; font-size: 22.2px; line-height: 30px; color: #ccc; white-space: nowrap; }
.phone { letter-spacing: -.18px; }
.place { letter-spacing: -.6px; }
.mail { letter-spacing: -.42px; }
.send { margin-top: 89px; font-size: 43px; letter-spacing: -.79px; }
.messages { margin-top: 13px; font-size: 23.6px; line-height: 33px; letter-spacing: -.45px; color: #ccc; }
.form { width: 900px; margin: 43px auto 0; display: flex; flex-direction: column; gap: 23px; }

.form input {
  height: 63px;
  border: 0;
  border-radius: 6px;
  padding: 2px 22px 0;
  background: #222;
  font: 19.6px "Open Sans", sans-serif;
  letter-spacing: -.26px;
}

.form input::placeholder { color: #757575; }

.scrollbar { width: 23px; background: #fcfcfc; display: flex; flex-direction: column; align-items: center; padding: 7px 0 5px; }
.thumb { width: 13px; height: 401px; margin: 101px 0 auto; border-radius: 7px; background: #8b8b8b; }

/* Taskbar */
.taskbar { height: 72px; flex: none; display: flex; background: #1c1c1c; border-top: 2px solid #3d3d3d; }
.widget { width: 374px; position: relative; padding: 18px 0 0 41px; }

.badge {
  position: absolute;
  height: 24px;
  border-radius: 12px;
  color: #000;
  font-size: 16px;
  line-height: 24px;
  text-align: center;
}

.pink { left: 46px; top: 8px; width: 24px; background: #ff99a4; }
.violet { right: 4px; top: 9px; width: 31px; height: 24px; background: #dc9fe4; }

.app { width: 66px; position: relative; display: flex; align-items: center; justify-content: center; padding-bottom: 2px; }
.app svg { position: relative; }

.running::after {
  content: "";
  position: absolute;
  left: 50%;
  bottom: 7px;
  width: 9px;
  height: 5px;
  margin-left: -4px;
  border-radius: 3px;
  background: #9a9a9a;
}

.focused::before,
.alert::before {
  content: "";
  position: absolute;
  inset: 4px 3px 6px;
  border: 1px solid #383838;
  border-radius: 7px;
  background: #2a2a2a;
}

.focused::after { width: 24px; margin-left: -12px; background: #dc9fe4; }
.alert::before { border-color: #252020; background: #231f1f; }
.alert::after { background: #ff99a4; }
.icon-w { font: 700 14px "Open Sans", sans-serif; fill: #fff; letter-spacing: -1px; }
.icon-nba { font: 700 5px "Open Sans", sans-serif; fill: #fff; }

.search {
  width: 330px;
  height: 48px;
  margin: 10px 3px 0 5px;
  border: 1px solid #4c4c4c;
  border-top: 2px solid #5e5e5e;
  border-radius: 24px;
  background: #3b3b3b;
  display: flex;
  align-items: center;
  padding: 0 8px 1px 17px;
  color: #d0d0d0;
  font-size: 20.6px;
  letter-spacing: -.32px;
}

.search span { flex: 1; margin-left: 15px; }

.tray { margin-left: auto; display: flex; align-items: center; padding: 0 30px 3px 0; font-size: 17.6px; }
.lang { width: 66px; margin: 1px 12px 0 16px; display: flex; flex-direction: column; align-items: center; line-height: 23px; }
.eng { letter-spacing: -.5px; }
.wifi { margin-right: 11px; }
.sound { margin-right: 11px; }
.clock { width: 106px; margin-right: 14px; display: flex; flex-direction: column; align-items: flex-end; line-height: 24px; padding-bottom: 1px; }
.date { letter-spacing: -.16px; }
.time { letter-spacing: -.08px; }
```
